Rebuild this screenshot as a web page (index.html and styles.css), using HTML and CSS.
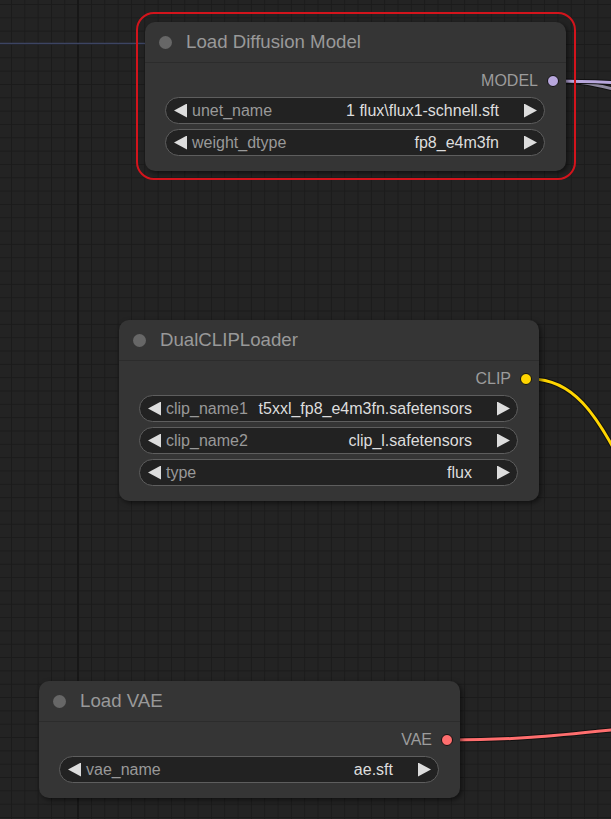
FILE: index.html
```html
<!DOCTYPE html>
<html lang="en">
  <head>
    <meta charset="UTF-8" />
    <meta name="viewport" content="width=device-width, initial-scale=1.0" />
    <title>Workflow</title>
    <link rel="stylesheet" href="styles.css">
  </head>
  <body>
    <div class="canvas">
      <svg class="links" width="611" height="819" viewBox="0 0 611 819">
        <line x1="0" y1="43.5" x2="146" y2="43.5" stroke="#3d4563" stroke-width="1.5" />
        <!-- MODEL -->
        <path d="M558 81 C585 81 598 86 640 95" stroke="#111" stroke-width="5" fill="none" />
        <path d="M558 81 C585 81 598 86 640 95" stroke="#8f8aa0" stroke-width="3" fill="none" />
        <path d="M558 81 C585 81 600 82 640 84" stroke="#111" stroke-width="5" fill="none" />
        <path d="M558 81 C585 81 600 82 640 84" stroke="#b8a7dd" stroke-width="3" fill="none" />
        <!-- CLIP -->
        <path d="M531 379 C572 379 596 412 625 470" stroke="#111" stroke-width="5" fill="none" />
        <path d="M531 379 C572 379 596 412 625 470" stroke="#ffd500" stroke-width="3" fill="none" />
        <!-- VAE -->
        <path d="M451 740 C520 740 560 735 640 727" stroke="#111" stroke-width="5" fill="none" />
        <path d="M451 740 C520 740 560 735 640 727" stroke="#ff6e6e" stroke-width="3" fill="none" />
      </svg>

      <div class="node node-unet selected">
        <div class="node-title"><span class="node-dot"></span>Load Diffusion Model</div>
        <div class="node-body">
          <div class="output">MODEL <span class="slot slot-model"></span></div>
          <div class="widget">
            <span class="arrow arrow-left"></span>
            <span class="label">unet_name</span>
            <span class="value">1 flux\flux1-schnell.sft</span>
            <span class="arrow arrow-right"></span>
          </div>
          <div class="widget">
            <span class="arrow arrow-left"></span>
            <span class="label">weight_dtype</span>
            <span class="value">fp8_e4m3fn</span>
            <span class="arrow arrow-right"></span>
          </div>
        </div>
      </div>

      <div class="node node-clip">
        <div class="node-title"><span class="node-dot"></span>DualCLIPLoader</div>
        <div class="node-body">
          <div class="output">CLIP <span class="slot slot-clip"></span></div>
          <div class="widget">
            <span class="arrow arrow-left"></span>
            <span class="label">clip_name1</span>
            <span class="value">t5xxl_fp8_e4m3fn.safetensors</span>
            <span class="arrow arrow-right"></span>
          </div>
          <div class="widget">
            <span class="arrow arrow-left"></span>
            <span class="label">clip_name2</span>
            <span class="value">clip_l.safetensors</span>
            <span class="arrow arrow-right"></span>
          </div>
          <div class="widget">
            <span class="arrow arrow-left"></span>
            <span class="label">type</span>
            <span class="value">flux</span>
            <span class="arrow arrow-right"></span>
          </div>
        </div>
      </div>

      <div class="node node-vae">
        <div class="node-title"><span class="node-dot"></span>Load VAE</div>
        <div class="node-body">
          <div class="output">VAE <span class="slot slot-vae"></span></div>
          <div class="widget">
            <span class="arrow arrow-left"></span>
            <span class="label">vae_name</span>
            <span class="value">ae.sft</span>
            <span class="arrow arrow-right"></span>
          </div>
        </div>
      </div>
    </div>
  </body>
</html>
```

FILE: styles.css
```css
* {
  box-sizing: border-box;
}

body {
  margin: 0;
  background: #222;
  font-family: "Liberation Sans", Arial, sans-serif;
  overflow: hidden;
}

.canvas {
  position: relative;
  width: 611px;
  height: 819px;
  background-color: #232323;
  background-image:
    linear-gradient(#171717, #171717),
    linear-gradient(90deg, #1b1b1b 1px, transparent 1px),
    linear-gradient(#1b1b1b 1px, transparent 1px);
  background-size: 2px 100%, 13.333px 13.333px, 13.333px 13.333px;
  background-position: 77px 0, 11px 0, 0 4px;
  background-repeat: no-repeat, repeat, repeat;
}

.links {
  position: absolute;
  left: 0;
  top: 0;
}

.node {
  position: absolute;
  background: #353535;
  border-radius: 10px;
  box-shadow: 2px 2px 5px rgba(0, 0, 0, 0.55);
}

.node-unet {
  left: 145px;
  top: 22px;
  width: 421px;
}

.node-clip {
  left: 119px;
  top: 320px;
  width: 420px;
}

.node-vae {
  left: 39px;
  top: 681px;
  width: 421px;
}

.selected::after {
  content: "";
  position: absolute;
  left: -9px;
  top: -10px;
  right: -10px;
  bottom: -9px;
  border: 2px solid #d3141c;
  border-radius: 18px;
  pointer-events: none;
}

.node-title {
  height: 41px;
  display: flex;
  align-items: center;
  gap: 14px;
  padding-left: 14px;
  font-size: 18.67px;
  color: #999;
  border-bottom: 1px solid #2c2c2c;
}

.node-dot {
  width: 13px;
  height: 13px;
  border-radius: 50%;
  background: #676767;
}

.node-body {
  padding: 0 21px 15px 20px;
  display: flex;
  flex-direction: column;
  gap: 5px;
}

.output {
  height: 22px;
  margin-top: 7px;
  margin-right: -14px;
  display: flex;
  align-items: center;
  justify-content: flex-end;
  gap: 9px;
  font-size: 16px;
  color: #9c9c9c;
}

.slot {
  width: 12px;
  height: 12px;
  border-radius: 50%;
  border: 1px solid #111;
}

.slot-model {
  background: #b8a7dd;
}

.slot-clip {
  background: #ffd500;
}

.slot-vae {
  background: #ff6e6e;
}

.widget {
  height: 27px;
  display: flex;
  align-items: center;
  padding: 0 7px 0 8px;
  background: #222;
  border: 1px solid #5e5e5e;
  border-radius: 14px;
  font-size: 16px;
  white-space: nowrap;
}

.arrow {
  width: 13px;
  height: 14px;
  background: #ddd;
  flex-shrink: 0;
}

.arrow-left {
  clip-path: polygon(0 50%, 100% 0, 100% 100%);
}

.arrow-right {
  clip-path: polygon(0 0, 100% 50%, 0 100%);
}

.label {
  margin-left: 5px;
  color: #999;
}

.value {
  margin-left: auto;
  margin-right: 25px;
  color: #ddd;
}
```
